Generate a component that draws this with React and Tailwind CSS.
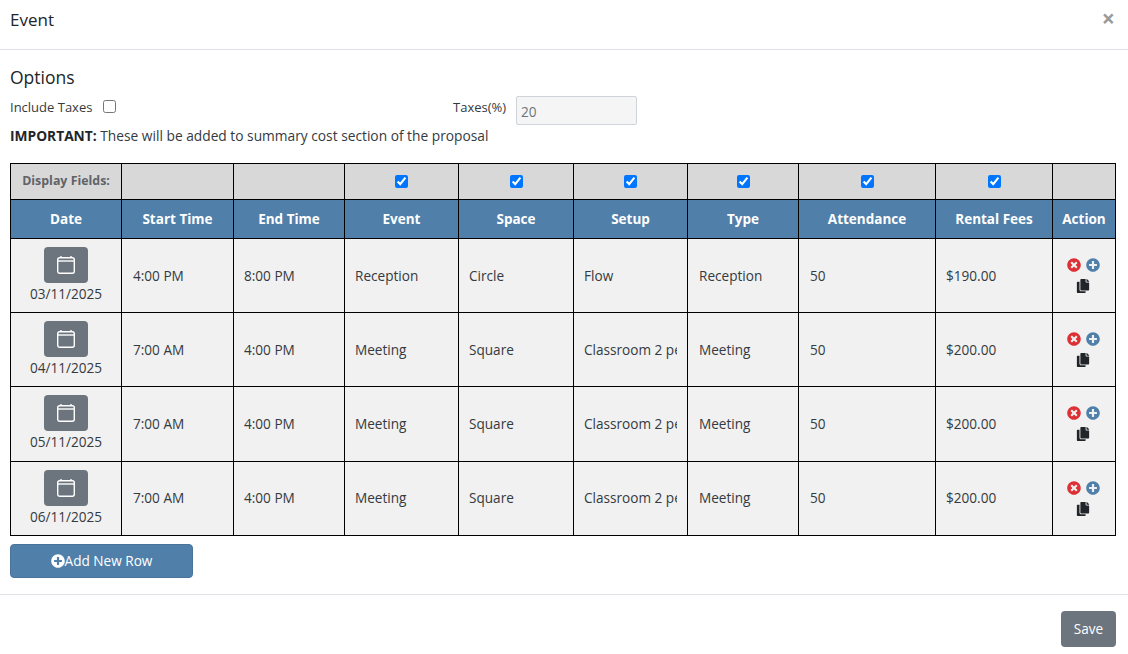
import { FaTimesCircle, FaPlusCircle, FaCopy } from 'react-icons/fa'

const columns = [
  { label: 'Date', width: 'w-[111px]' },
  { label: 'Start Time', width: 'w-[112px]' },
  { label: 'End Time', width: 'w-[111px]' },
  { label: 'Event', width: 'w-[114px]', check: true },
  { label: 'Space', width: 'w-[115px]', check: true },
  { label: 'Setup', width: 'w-[114px]', check: true },
  { label: 'Type', width: 'w-[111px]', check: true },
  { label: 'Attendance', width: 'w-[137px]', check: true },
  { label: 'Rental Fees', width: 'w-[117px]', check: true },
  { label: 'Action', width: 'w-[63px]' },
]

const rows = [
  { date: '03/11/2025', start: '4:00 PM', end: '8:00 PM', event: 'Reception', space: 'Circle', setup: 'Flow', type: 'Reception', attendance: '50', fees: '$190.00' },
  { date: '04/11/2025', start: '7:00 AM', end: '4:00 PM', event: 'Meeting', space: 'Square', setup: 'Classroom 2 per table', type: 'Meeting', attendance: '50', fees: '$200.00' },
  { date: '05/11/2025', start: '7:00 AM', end: '4:00 PM', event: 'Meeting', space: 'Square', setup: 'Classroom 2 per table', type: 'Meeting', attendance: '50', fees: '$200.00' },
  { date: '06/11/2025', start: '7:00 AM', end: '4:00 PM', event: 'Meeting', space: 'Square', setup: 'Classroom 2 per table', type: 'Meeting', attendance: '50', fees: '$200.00' },
]

function CalendarIcon() {
  return (
    <svg width="20" height="20" viewBox="0 0 20 20" fill="none" stroke="white" strokeWidth="1.4">
      <rect x="1.7" y="2.7" width="16.6" height="15.6" rx="2" />
      <path d="M1.7 6h16.6" />
      <path d="M5 1v2M15 1v2" />
    </svg>
  )
}

function Row({ row, index }) {
  // rows 3 and 4 sit a pixel higher in their cells than rows 1 and 2
  const high = index >= 2
  const cell = `border border-black px-[10px] text-left align-middle ${high ? '' : 'pt-[1px]'}`
  return (
    <tr className={`bg-[#f1f1f1] ${index === 2 ? 'h-[75px]' : 'h-[74px]'}`}>
      <td className={`border border-black text-center align-middle ${index === 2 ? 'pb-[1px]' : 'pt-[1px]'}`}>
        <button className="mx-auto -mt-[1px] flex h-[36px] w-[44px] items-center justify-center rounded-[4px] bg-[#6c757d]">
          <CalendarIcon />
        </button>
        <div className="mt-[1px] leading-[20px]">{row.date}</div>
      </td>
      <td className={`${cell} !pl-[11px]`}>{row.start}</td>
      <td className={cell}>{row.end}</td>
      <td className={cell}>{row.event}</td>
      <td className={cell}>{row.space}</td>
      <td className={cell}>
        <input readOnly value={row.setup} className="w-full bg-transparent outline-none" />
      </td>
      <td className={`${cell} !pl-[11px]`}>{row.type}</td>
      <td className={`${cell} !pl-[11px]`}>{row.attendance}</td>
      <td className={cell}>{row.fees}</td>
      <td className={`border border-black align-middle ${index === 2 ? 'pb-[1px]' : ''}`}>
        <div className="flex items-center justify-center gap-[5px] pr-[2px]">
          <FaTimesCircle className="text-[14px] text-[#dc3035]" />
          <FaPlusCircle className="text-[14px] text-[#507faa]" />
        </div>
        <div className="flex justify-center pt-[7px] pr-[2px]">
          <FaCopy className="text-[14px] text-[#212529]" />
        </div>
      </td>
    </tr>
  )
}

export default function App() {
  return (
    <div className="flex h-[654px] w-[1128px] flex-col overflow-hidden bg-white font-['Open_Sans',sans-serif] text-[13.6px] text-[#343a40]">
      {/* Header */}
      <div className="flex h-[50px] shrink-0 items-start justify-between border-b border-[#dee2e6] pl-[10px] pr-[13px] pt-[8px]">
        <h5 className="text-[17px] leading-[24px] text-[#212529]">Event</h5>
        <span className="text-[23px] font-bold leading-[20px] text-[#9a9a9a]">×</span>
      </div>

      {/* Body */}
      <div className="h-[545px] shrink-0 border-b border-[#dee2e6] px-[10px] pt-[16px]">
        <h5 className="text-[17.5px] leading-[22px] text-[#212529]">Options</h5>

        <div className="flex h-[34px] items-start pt-[10px] text-[13px]">
          <div className="flex w-[443px] items-center">
            <span>Include Taxes</span>
            <input type="checkbox" className="ml-[11px] -mt-[3px] h-[13px] w-[13px]" />
          </div>
          <span className="w-[63px]">Taxes(%)</span>
          <input
            readOnly
            value="20"
            className="-mt-[2px] h-[29px] w-[121px] rounded-[2px] border border-[#ced4da] bg-[#f5f5f5] px-[4px] pt-[2px] text-[13.6px] text-[#6c757d]"
          />
        </div>

        <p className="mt-[5px] text-[13.75px] leading-[18px]">
          <b className="font-bold text-[#212529]">IMPORTANT:</b> These will be added to summary cost section of the proposal
        </p>

        <table className="mt-[18px] w-[1105px] table-fixed border-collapse">
          <colgroup>
            {columns.map((c) => (
              <col key={c.label} className={c.width} />
            ))}
          </colgroup>
          <thead>
            <tr className="h-[36px] bg-[#d8d8d8]">
              <th className="border border-black text-[12.4px] font-bold text-[#5f6368]">Display Fields:</th>
              {columns.slice(1).map((c) => (
                <th key={c.label} className="border border-black pb-[2px]">
                  {c.check && <input type="checkbox" defaultChecked className="h-[13px] w-[13px] align-middle" />}
                </th>
              ))}
            </tr>
            <tr className="h-[39px] bg-[#507faa] text-white">
              {columns.map((c) => (
                <th key={c.label} className="border border-black text-[13.5px] font-bold">{c.label}</th>
              ))}
            </tr>
          </thead>
          <tbody>
            {rows.map((row, i) => (
              <Row key={row.date} row={row} index={i} />
            ))}
          </tbody>
        </table>

        <button className="mt-[8px] flex h-[34px] w-[183px] items-center justify-center rounded-[4px] border border-[#4a7399] bg-[#507faa] text-white">
          <FaPlusCircle className="text-[14px]" />
          Add New Row
        </button>
      </div>

      {/* Footer */}
      <div className="flex flex-1 items-start justify-end pr-[12px] pt-[16px]">
        <button className="h-[36px] w-[55px] rounded-[4px] bg-[#6c757d] text-white">Save</button>
      </div>
    </div>
  )
}
